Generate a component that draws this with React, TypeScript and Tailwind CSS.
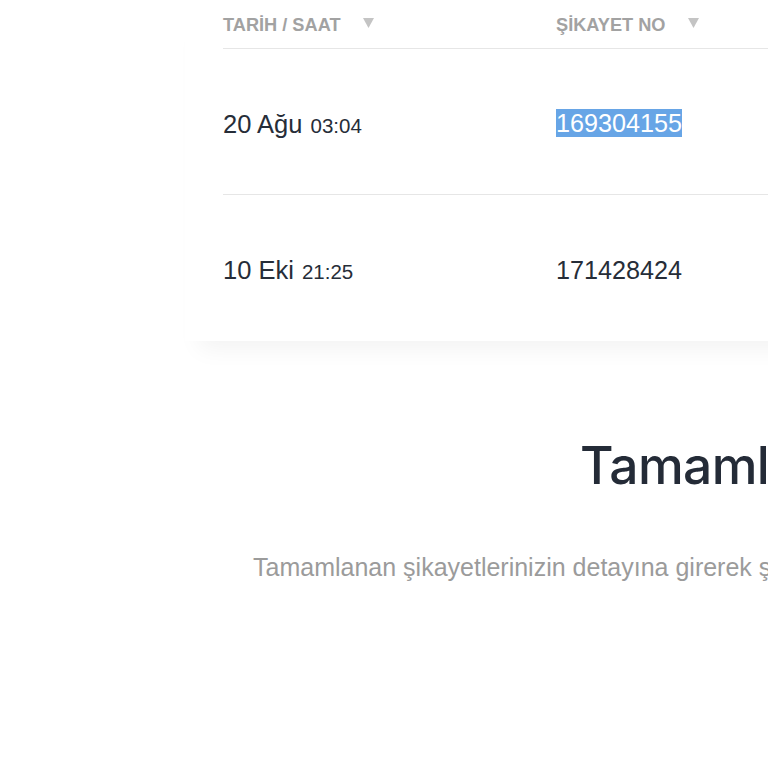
const rows = [
  { day: "20 Ağu", time: "03:04", no: "169304155", selected: true },
  { day: "10 Eki", time: "21:25", no: "171428424", selected: false },
];

function SortArrow() {
  return (
    <svg width="11" height="10" viewBox="0 0 11 10" className="ml-[22px] -mt-[5px]">
      <path d="M0 0h11L5.5 10z" fill="#c4c4c4" />
    </svg>
  );
}

export default function App() {
  return (
    <div className="w-[768px] h-[768px] overflow-hidden bg-white font-['Liberation_Sans',Arial,sans-serif]">
      <div className="ml-[185px] w-[1000px] bg-white shadow-[0_22px_22px_-14px_rgba(0,0,0,0.05)] pl-[38px]">
        <div className="flex h-[49px] items-center border-b border-[#e6e6e6] pt-[3px] text-[18.2px] font-bold uppercase text-[#a2a2a2]">
          <div className="flex w-[333px] items-center">
            TARİH / SAAT
            <SortArrow />
          </div>
          <div className="flex items-center">
            ŞİKAYET NO
            <SortArrow />
          </div>
        </div>
        {rows.map((r, i) => (
          <div
            key={r.no}
            className={`flex h-[146px] items-center text-[#262d38] ${
              i < rows.length - 1 ? "border-b border-[#e6e6e6]" : ""
            }`}
          >
            <div className="w-[333px] pt-[5px] text-[25.5px]">
              {r.day} <span className="ml-[1px] text-[20.5px]">{r.time}</span>
            </div>
            <div className="pt-[5px] text-[25.2px]">
              <span className={r.selected ? "bg-[#67a5e6] text-white" : ""}>{r.no}</span>
            </div>
          </div>
        ))}
      </div>

      <div className="mt-[99px] whitespace-nowrap pl-[580px] font-['Inter',sans-serif] text-[51.5px] font-medium leading-none tracking-[-0.6px] text-[#242b37]">
        Tamamlanan Şikayetler
      </div>
      <div className="mt-[57px] whitespace-nowrap pl-[253px] text-[25px] text-[#9b9b9b]">
        Tamamlanan şikayetlerinizin detayına girerek şikayet durumunu görebilirsiniz.
      </div>
    </div>
  );
}
